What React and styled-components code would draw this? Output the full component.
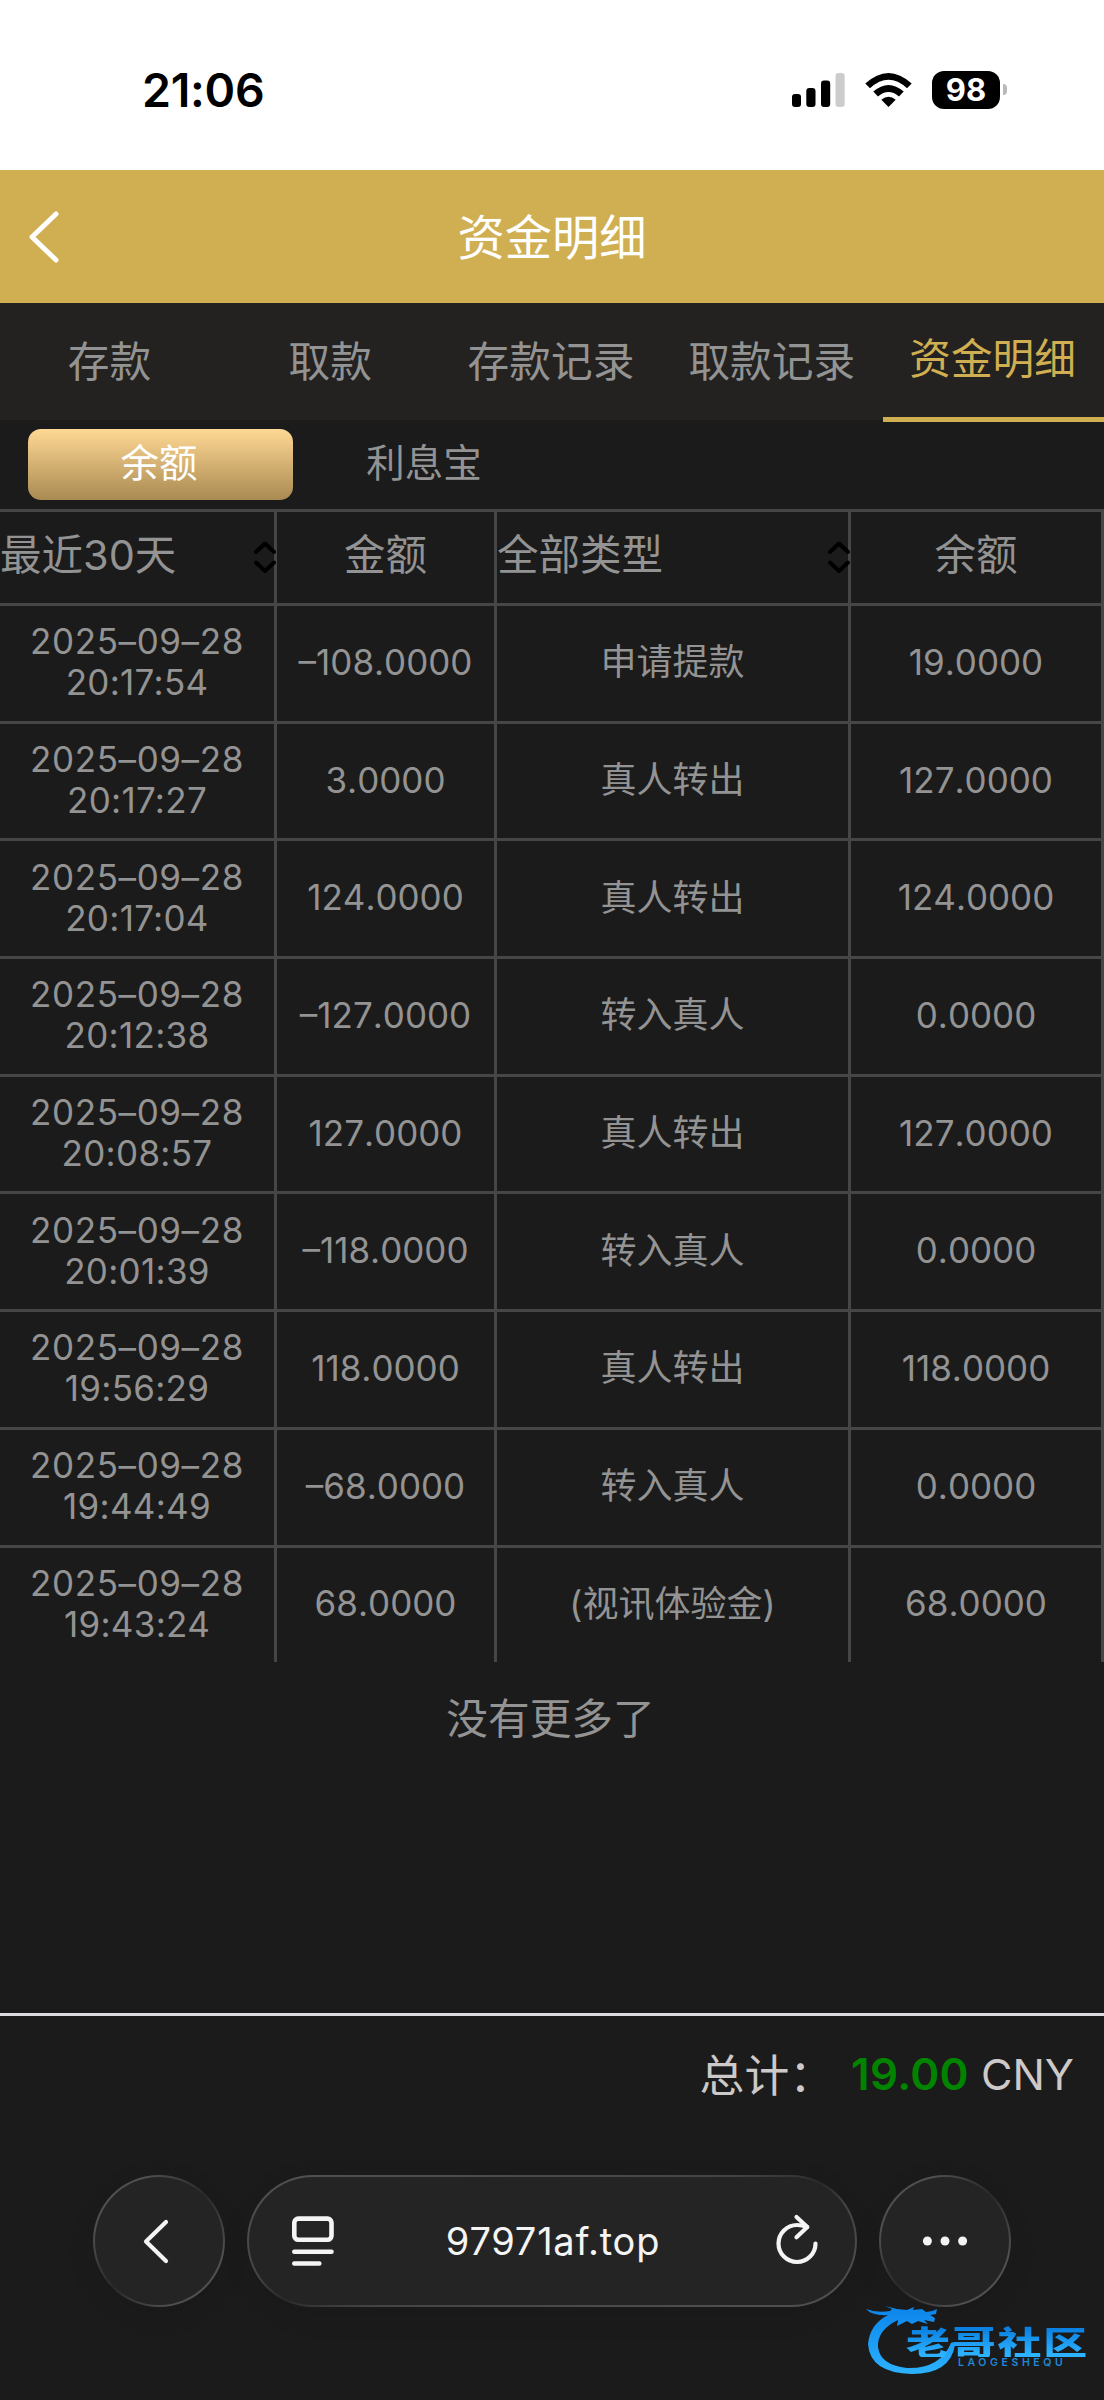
import React from 'react';
import styled, { createGlobalStyle } from 'styled-components';

const GlobalStyle = createGlobalStyle`
  *, *::before, *::after { box-sizing: border-box; }
  body {
    margin: 0;
    background: #1b1b1b;
    font-family: Inter, "Noto Sans CJK SC", sans-serif;
    font-weight: 400;
    color: #939393;
  }
`;

const Screen = styled.div`
  position: relative;
  width: 1104px;
  height: 2400px;
  display: flex;
  flex-direction: column;
  background: #1b1b1b;
  overflow: hidden;
`;

const StatusBar = styled.div`
  height: 170px;
  flex: none;
  display: flex;
  align-items: center;
  justify-content: space-between;
  padding: 9px 97px 0 142px;
  background: #fff;
`;

const Clock = styled.span`
  font-size: 46.5px;
  line-height: 56px;
  font-weight: 600;
  color: #000;
  letter-spacing: -0.3px;
`;

const StatusIcons = styled.div`
  display: flex;
  align-items: center;
  gap: 20px;
  svg { display: block; }
`;

const BatteryGroup = styled.div`
  display: flex;
  align-items: center;
  gap: 3px;
`;

const Battery = styled.div`
  width: 68px;
  height: 38px;
  border-radius: 12px;
  background: #000;
  color: #fff;
  font-size: 31px;
  line-height: 38px;
  font-weight: 700;
  text-align: center;
`;

const BatteryTip = styled.div`
  width: 4px;
  height: 11px;
  border-radius: 0 4px 4px 0;
  background: #b9b9b9;
`;

const Header = styled.header`
  height: 133px;
  flex: none;
  display: grid;
  grid-template-columns: 90px 1fr 90px;
  align-items: center;
  background: #d0ae52;
  color: #fff;
  svg { display: block; margin-left: 29px; }
`;

const Title = styled.h1`
  margin: 0;
  padding-top: 2px;
  font-size: 47.3px;
  line-height: 60px;
  font-weight: 400;
  text-align: center;
`;

const Tabs = styled.nav`
  height: 117px;
  flex: none;
  display: grid;
  grid-template-columns: repeat(5, 1fr);
  background: #232220;
`;

const Tab = styled.div`
  height: ${(p) => (p.$active ? 119 : 117)}px;
  display: flex;
  align-items: center;
  justify-content: center;
  padding: 0 2px ${(p) => (p.$active ? 8 : 6)}px 0;
  font-size: 41.7px;
  color: ${(p) => (p.$active ? '#d0ae52' : '#939393')};
  border-bottom: ${(p) => (p.$active ? '5px solid #d0ae52' : '0')};
`;

const SubTabs = styled.div`
  height: 89px;
  flex: none;
  display: flex;
  padding: 9px 28px 0;
`;

const SubTab = styled.div`
  width: 265px;
  height: 71px;
  display: flex;
  align-items: center;
  justify-content: center;
  padding: 0 3px 9px 0;
  border-radius: 13px;
  font-size: 38.5px;
  font-weight: 400;
  color: ${(p) => (p.$active ? '#fff' : '#939393')};
  background: ${(p) => (p.$active ? 'linear-gradient(#ffd894, #a98a52)' : 'none')};
`;

const Row = styled.div`
  display: grid;
  grid-template-columns: 277px 220px 354px 253px;
  height: ${(p) => (p.$head ? 94 : p.$last ? 114.5 : 117.7)}px;
  flex: none;
`;

const Table = styled.div`
  flex: none;
  border-top: 3px solid #464646;
`;

const Cell = styled.div`
  display: flex;
  flex-direction: ${(p) => (p.$stack ? 'column' : 'row')};
  align-items: center;
  justify-content: ${(p) => (p.$select ? 'space-between' : 'center')};
  padding: 0 0 ${(p) => (p.$head ? 4 : p.$stack ? 2 : 1)}px 0;
  font-size: ${(p) => (p.$head ? 41.5 : 36)}px;
  line-height: 41px;
  text-align: center;
  border-right: 3px solid #464646;
  border-bottom: ${(p) => (p.$last ? 0 : 3)}px solid #464646;
  svg { flex: none; margin: 3px -2px 0 0; }
`;

const Num = styled.span`
  padding-bottom: 1px;
  font-size: 35px;
  font-kerning: none;
`;

const DateText = styled.span`
  font-size: 35px;
  letter-spacing: 0.6px;
`;

const TimeText = styled.span`
  font-size: 35px;
  letter-spacing: 0.3px;
`;

const End = styled.p`
  margin: 32px 0 0;
  padding-right: 3px;
  flex: 1;
  font-size: 41.7px;
  line-height: 50px;
  text-align: center;
`;

const Total = styled.div`
  height: 126px;
  flex: none;
  display: flex;
  align-items: center;
  justify-content: flex-end;
  padding: 0 30px 7px 0;
  border-top: 3px solid #dedbe0;
  font-size: 44px;
  color: #cdc9c9;
  white-space: pre;
`;

const TotalLabel = styled.span`
  margin-right: 17px;
  padding-bottom: 3px;
  font-size: 44.8px;
`;

const Amount = styled.b`
  font-weight: 600;
  letter-spacing: 0.3px;
  color: #008400;
`;

const Currency = styled.span`
  font-size: 43px;
`;

const BrowserBar = styled.footer`
  height: 261px;
  flex: none;
  display: flex;
  align-items: flex-start;
  gap: 22px;
  padding: 36px 93px 0;
  color: #f4f4f4;
`;

const Glass = styled.div`
  height: 132px;
  width: ${(p) => (p.$wide ? 610 : 132)}px;
  flex: none;
  display: flex;
  align-items: center;
  justify-content: ${(p) => (p.$wide ? 'space-between' : 'center')};
  padding: 0 ${(p) => (p.$wide ? '35px 0 38px' : p.$back ? '7px 0 0' : '0')};
  border: 2px solid transparent;
  border-radius: 66px;
  background:
    linear-gradient(#242424, #242424) padding-box,
    linear-gradient(to bottom right, #505050 ${(p) => (p.$wide ? '5%, #444 40%' : '20%')}, #292929 50%,
      ${(p) => (p.$wide ? '#444 60%, #505050 95%' : '#505050 80%')}) border-box;
  box-shadow: 0 8px 30px rgba(0, 0, 0, 0.08);
`;

const Address = styled.span`
  padding-right: 7px;
  font-size: 38px;
  line-height: 46px;
  font-weight: 400;
  letter-spacing: 0.75px;
`;

const Watermark = styled.div`
  position: absolute;
  left: 864px;
  top: 2300px;
  width: 228px;
  height: 78px;
`;

const WatermarkArt = styled.svg`
  position: absolute;
  inset: 0;
`;

const WatermarkName = styled.div`
  position: absolute;
  left: 42px;
  top: 25px;
  height: 32px;
  font: 900 33px/32px "Noto Sans CJK SC", sans-serif;
  letter-spacing: 1.4px;
  white-space: nowrap;
  transform: scaleX(1.33);
  transform-origin: left;
  background: linear-gradient(#0a7fe0 10%, #2cb2ff 90%);
  background-clip: text;
  color: transparent;
`;

const WatermarkLatin = styled.div`
  position: absolute;
  left: 94px;
  top: 58px;
  font: 600 10.5px/10px Inter, sans-serif;
  letter-spacing: 3.6px;
  color: #2088d4;
`;

const Chevron = ({ w, h, sw }) => (
  <svg width={w} height={h} viewBox={`0 0 ${w} ${h}`} fill="none" stroke="currentColor" strokeWidth={sw} strokeLinecap="round" strokeLinejoin="round">
    <path d={`M${w - 3} 3L3 ${h / 2}L${w - 3} ${h - 3}`} />
  </svg>
);

const SortIcon = () => (
  <svg width="22" height="34" viewBox="0 0 22 34" fill="none" stroke="#000" strokeWidth="4" strokeLinecap="round" strokeLinejoin="round">
    <path d="M2 12L11 3.500L20 12M2 22.500L11 31L20 22.500" />
  </svg>
);

const SignalIcon = () => (
  <svg width="53" height="36" viewBox="0 0 53 36">
    <rect x="0" y="22" width="9" height="13" rx="3" />
    <rect x="14.300" y="16" width="9.200" height="19" rx="3" />
    <rect x="29" y="8.500" width="9.200" height="26.500" rx="3" />
    <rect x="43.500" y="1" width="9.200" height="34" rx="3" fill="#ccc" />
  </svg>
);

const WifiIcon = () => (
  <svg width="47" height="36" viewBox="0 0 47 36">
    <path d="M23.500 35L16.300 27.700Q23.500 21.800 30.700 27.700Z" />
    <path d="M8.300 19.600Q23.500 6.200 38.700 19.600L34 24.400Q23.500 15.600 13 24.400Z" />
    <path d="M0.300 11.600Q23.500 -9.600 46.700 11.600L42 16.300Q23.500 -0.600 5 16.300Z" />
  </svg>
);

const ReaderIcon = () => (
  <svg width="52" height="52" viewBox="0 0 52 52" fill="none" stroke="currentColor" strokeWidth="4.600" strokeLinecap="round">
    <rect x="7.300" y="3.600" width="37.200" height="21.200" rx="4" />
    <path d="M7.300 36.800H44.500M7.300 48.500H32.300" />
  </svg>
);

const ReloadIcon = () => (
  <svg width="46" height="56" viewBox="0 0 46 56" fill="none" stroke="currentColor" strokeWidth="4.200" strokeLinecap="round" strokeLinejoin="round">
    <path d="M41.500 30.500A18.500 18.500 0 1 1 23 12Q28 12 33 14" />
    <path d="M22.500 4L33.300 14L22.500 24.300" />
  </svg>
);

const DotsIcon = () => (
  <svg width="46" height="12" viewBox="0 0 46 12" fill="currentColor">
    <circle cx="5.400" cy="6" r="4.500" />
    <circle cx="23" cy="6" r="4.500" />
    <circle cx="40.600" cy="6" r="4.500" />
  </svg>
);

const records = [
  ['20:17:54', '–108.0000', '申请提款', '19.0000'],
  ['20:17:27', '3.0000', '真人转出', '127.0000'],
  ['20:17:04', '124.0000', '真人转出', '124.0000'],
  ['20:12:38', '–127.0000', '转入真人', '0.0000'],
  ['20:08:57', '127.0000', '真人转出', '127.0000'],
  ['20:01:39', '–118.0000', '转入真人', '0.0000'],
  ['19:56:29', '118.0000', '真人转出', '118.0000'],
  ['19:44:49', '–68.0000', '转入真人', '0.0000'],
  ['19:43:24', '68.0000', '(视讯体验金)', '68.0000'],
];

const tabs = ['存款', '取款', '存款记录', '取款记录', '资金明细'];

export default function App() {
  return (
    <Screen>
      <GlobalStyle />
      <StatusBar>
        <Clock>21:06</Clock>
        <StatusIcons>
          <SignalIcon />
          <WifiIcon />
          <BatteryGroup>
            <Battery>98</Battery>
            <BatteryTip />
          </BatteryGroup>
        </StatusIcons>
      </StatusBar>
      <Header>
        <Chevron w={30} h={52} sw={5} />
        <Title>资金明细</Title>
      </Header>
      <Tabs>
        {tabs.map((t, i) => (
          <Tab key={t} $active={i === 4}>{t}</Tab>
        ))}
      </Tabs>
      <SubTabs>
        <SubTab $active>余额</SubTab>
        <SubTab>利息宝</SubTab>
      </SubTabs>
      <Table>
        <Row $head>
          <Cell $head $select>最近30天<SortIcon /></Cell>
          <Cell $head>金额</Cell>
          <Cell $head $select>全部类型<SortIcon /></Cell>
          <Cell $head>余额</Cell>
        </Row>
        {records.map(([time, amount, kind, balance], i) => {
          const last = i === records.length - 1;
          return (
            <Row key={time} $last={last}>
              <Cell $stack $last={last}>
                <DateText>2025–09–28</DateText>
                <TimeText>{time}</TimeText>
              </Cell>
              <Cell $last={last}><Num>{amount}</Num></Cell>
              <Cell $last={last}>{kind}</Cell>
              <Cell $last={last}><Num>{balance}</Num></Cell>
            </Row>
          );
        })}
      </Table>
      <End>没有更多了</End>
      <Total>
        <TotalLabel>总计：</TotalLabel>
        <Amount>19.00</Amount>
        <Currency> CNY</Currency>
      </Total>
      <BrowserBar>
        <Glass $back><Chevron w={26} h={45} sw={4.2} /></Glass>
        <Glass $wide>
          <ReaderIcon />
          <Address>97971af.top</Address>
          <ReloadIcon />
        </Glass>
        <Glass><DotsIcon /></Glass>
      </BrowserBar>
      <Watermark>
        <WatermarkArt width="228" height="78" viewBox="0 0 228 78">
          <defs>
            <linearGradient id="water" x1="0" y1="0" x2="0" y2="1">
              <stop offset="0" stopColor="#0b84ea" />
              <stop offset="1" stopColor="#2cb2ff" />
            </linearGradient>
          </defs>
          <path
            fill="url(#water)"
            d="M2 9Q12 13 26 11L28 9L21 6L33 9L43 10L50 7L49 10L58 9L62 12Q68 12 73 9L72 14L66 15L71 18L70 22L60 20L64 24L54 21L48 24L43 21L33 26L34 20Q13 30 14 47Q16 65 43 68Q76 69 87 43Q90 41 91 45Q86 74 48 74Q6 73 4 44Q6 24 24 15Q8 16 2 9Z"
          />
        </WatermarkArt>
        <WatermarkName>老哥社区</WatermarkName>
        <WatermarkLatin>LAOGESHEQU</WatermarkLatin>
      </Watermark>
    </Screen>
  );
}
